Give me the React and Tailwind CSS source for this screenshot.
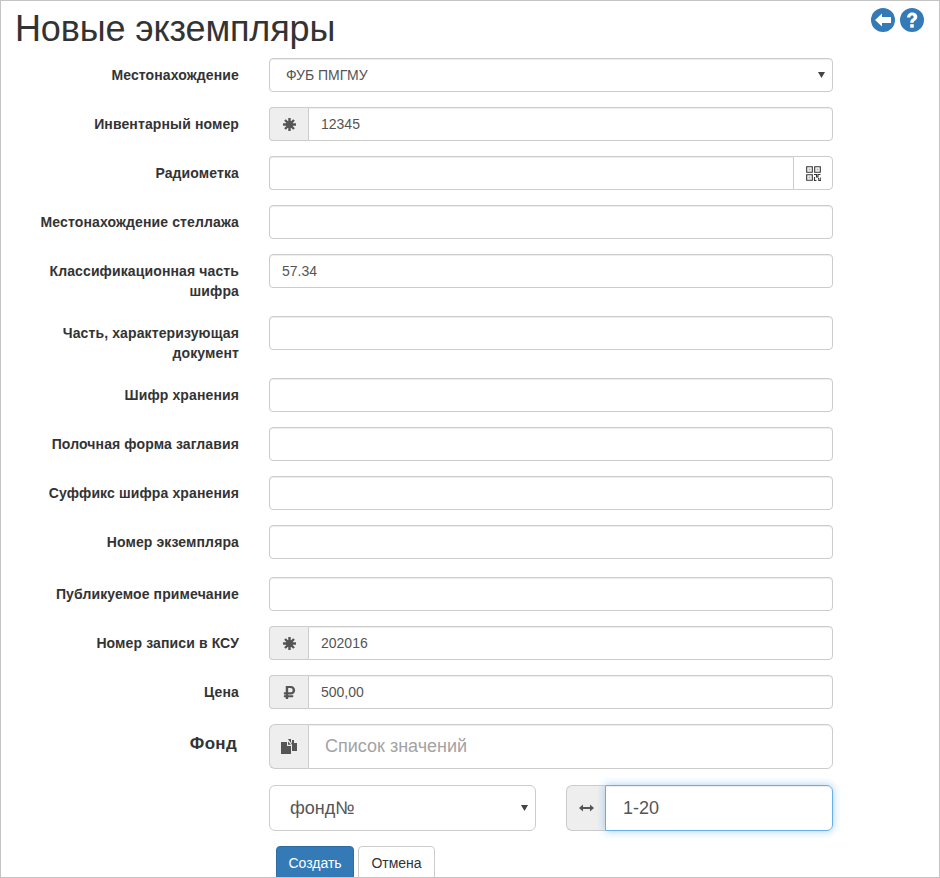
import React from "react";
import { FaRubleSign } from "react-icons/fa";

const inputCls =
  "w-full h-[34px] px-3 border border-[#ccc] rounded text-sm text-[#555] bg-white outline-none shadow-[inset_0_1px_1px_rgba(0,0,0,0.075)]";

const AsteriskIcon = () => (
  <svg width="13" height="13" viewBox="0 0 13 13" fill="none" stroke="#555">
    <path strokeWidth="2.4" d="M6.500 0v13M0 6.500h13M2 2l9 9M11 2l-9 9" />
    <circle cx="6.500" cy="6.500" r="3.500" fill="#555" stroke="none" />
  </svg>
);

const QrIcon = () => (
  <svg width="15" height="15" viewBox="0 0 15 15" fill="none" stroke="#333" strokeWidth="1.1">
    <path d="M.7.7h5.600v5.600H.7zM8.700.7h5.600v5.600H8.700zM.7 8.700h5.600v5.600H.7z" />
    <path d="M2.500 2.500h2v2h-2zM10.500 2.500h2v2h-2zM2.500 10.500h2v2h-2z" fill="#a9b8c4" stroke="none" />
    <path d="M8 8.500h2.500v2.500h1.500V8.500h2.500M8.500 11v3.500h2M12 12.500h.8v2h2v-3" />
  </svg>
);

const FilesIcon = () => (
  <svg width="16" height="15" viewBox="0 0 16 15" fill="#555">
    <path d="M0 3h6v4h4v8H0z" />
    <path d="M7 2.500l3 3.300H7z" />
    <path d="M7 0h3v3l.5 1H10L8 1.500zM11 1h2v3h3v8h-5V6l-1-2h1z" />
  </svg>
);

const ResizeIcon = () => (
  <svg width="15" height="10" viewBox="0 0 15 10" fill="#555">
    <path d="M0 5l4-3.500V4h7V1.500L15 5l-4 3.500V6H4v2.500z" />
  </svg>
);

const BackIcon = () => (
  <svg width="24" height="24" viewBox="0 0 24 24">
    <circle cx="12" cy="12" r="12" fill="#337ab7" />
    <path d="M4 12l7-6.500V9h9v6h-9v3.500z" fill="#fff" />
  </svg>
);

const HelpIcon = () => (
  <svg width="24" height="24" viewBox="0 0 24 24">
    <circle cx="12" cy="12" r="12" fill="#337ab7" />
    <path d="M7 9.500C7.300 6 9.500 4.500 12.300 4.500c3 0 5 1.700 5 4.300 0 2-1 3-2.400 3.900-1 .7-1.200 1.100-1.200 2H10.200c0-2 .6-3 2-4 .9-.6 1.400-1 1.400-1.800 0-.8-.6-1.300-1.500-1.300-1 0-1.600.6-1.700 1.900z" fill="#fff" />
    <path d="M10.200 16.200h3.600v3.500h-3.600z" fill="#fff" />
  </svg>
);

const Caret = () => (
  <svg className="absolute right-[8px] top-1/2 -translate-y-1/2 pointer-events-none" width="7" height="6" viewBox="0 0 7 6" fill="#444">
    <path d="M0 0h7L3.500 6z" />
  </svg>
);

const Addon = ({ children }) => (
  <span className="w-[39px] h-[34px] shrink-0 flex items-center justify-center bg-[#eee] border border-[#ccc] border-r-0 rounded-l">
    {children}
  </span>
);

const Row = ({ label, children, mb = "mb-[15px]" }) => (
  <div className={`flex ${mb}`}>
    <label className="w-[238px] shrink-0 pt-[7px] text-right text-sm leading-5 font-bold text-[#333] tracking-[0.12px]">
      {label}
    </label>
    <div className="w-[564px] ml-[30px]">{children}</div>
  </div>
);

const TextRow = ({ label, value = "", mb }) => (
  <Row label={label} mb={mb}>
    <input className={inputCls} defaultValue={value} />
  </Row>
);

const AddonRow = ({ label, icon, value }) => (
  <Row label={label}>
    <div className="flex">
      <Addon>{icon}</Addon>
      <input className={`${inputCls} rounded-l-none`} defaultValue={value} />
    </div>
  </Row>
);

export default function App() {
  return (
    <div className="h-[878px] overflow-hidden border border-[#c4c4c4] bg-white font-['Liberation_Sans',Arial,sans-serif] text-[#333] relative">
      <div className="absolute right-[15px] top-[7px] flex gap-[5px]">
        <BackIcon />
        <HelpIcon />
      </div>
      <h1 className="pl-[14px] pt-[8px] text-[36px] leading-[40px] font-normal h-[57px] tracking-[-0.13px]">Новые экземпляры</h1>
      <form>
        <Row label="Местонахождение">
          <div className="relative">
            <select className={`${inputCls} appearance-none pl-4`} defaultValue="ФУБ ПМГМУ">
              <option>ФУБ ПМГМУ</option>
            </select>
            <Caret />
          </div>
        </Row>
        <AddonRow label="Инвентарный номер" icon={<AsteriskIcon />} value="12345" />
        <Row label="Радиометка">
          <div className="flex">
            <input className={`${inputCls} rounded-r-none border-r-0`} />
            <span className="w-[40px] h-[34px] shrink-0 flex items-center justify-center border border-[#ccc] rounded-r">
              <QrIcon />
            </span>
          </div>
        </Row>
        <TextRow label="Местонахождение стеллажа" />
        <TextRow label="Классификационная часть шифра" value="57.34" />
        <TextRow label="Часть, характеризующая документ" />
        <TextRow label="Шифр хранения" />
        <TextRow label="Полочная форма заглавия" />
        <TextRow label="Суффикс шифра хранения" />
        <TextRow label="Номер экземпляра" mb="mb-[18px]" />
        <TextRow label="Публикуемое примечание" />
        <AddonRow label="Номер записи в КСУ" icon={<AsteriskIcon />} value="202016" />
        <AddonRow label="Цена" icon={<FaRubleSign size={15} color="#555" />} value="500,00" />
        <div className="flex mb-[16px]">
          <label className="w-[236px] shrink-0 pt-[10px] text-right text-[17px] leading-5 font-bold tracking-[0.3px]">Фонд</label>
          <div className="w-[564px] ml-[32px] flex">
            <span className="w-[39px] h-[45px] shrink-0 flex items-center justify-center bg-[#eee] border border-[#ccc] border-r-0 rounded-l-md">
              <FilesIcon />
            </span>
            <input
              className="w-full h-[45px] px-4 border border-[#ccc] rounded-r-md text-[18px] text-[#555] placeholder:text-[#a3a3a3] outline-none shadow-[inset_0_1px_1px_rgba(0,0,0,0.075)]"
              placeholder="Список значений"
            />
          </div>
        </div>
        <div className="flex ml-[268px] w-[564px] mb-[15px]">
          <div className="relative w-[267px] shrink-0">
            <select className="w-full h-[46px] pl-5 pr-4 appearance-none border border-[#ccc] rounded-md bg-white text-[18px] text-[#555] outline-none" defaultValue="фонд№">
              <option>фонд№</option>
            </select>
            <Caret />
          </div>
          <div className="flex ml-[30px] flex-1">
            <span className="w-[39px] h-[46px] shrink-0 flex items-center justify-center bg-[#eee] border border-[#ccc] border-r-0 rounded-l-md">
              <ResizeIcon />
            </span>
            <input
              className="w-full h-[46px] pl-[17px] pr-4 border border-[#66afe9] rounded-r-md text-[18px] text-[#555] outline-none shadow-[inset_0_1px_1px_rgba(0,0,0,0.075),0_0_8px_rgba(102,175,233,0.6)]"
              defaultValue="1-20"
            />
          </div>
        </div>
        <div className="flex gap-1 ml-[275px]">
          <button type="button" className="w-[78px] h-[34px] bg-[#337ab7] border border-[#2e6da4] rounded text-sm text-white">
            Создать
          </button>
          <button type="button" className="w-[77px] h-[34px] bg-white border border-[#ccc] rounded text-sm text-[#333]">
            Отмена
          </button>
        </div>
      </form>
    </div>
  );
}
